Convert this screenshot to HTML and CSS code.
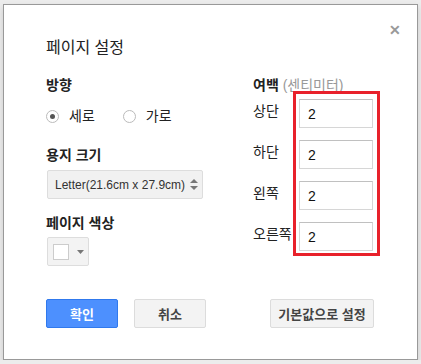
FILE: index.html
```html
<!DOCTYPE html>
<html lang="ko">
<head>
    <meta charset="UTF-8">
    <title>페이지 설정</title>
    <link rel="stylesheet" href="styles.css">
</head>
<body>

<div class="dialog">
    <span class="close">&#x2715;</span>
    <h1 class="title">페이지 설정</h1>

    <div class="columns">
        <div class="col-left">
            <h2 class="label">방향</h2>
            <div class="radios">
                <label class="radio"><span class="dot checked"></span>세로</label>
                <label class="radio"><span class="dot"></span>가로</label>
            </div>

            <h2 class="label">용지 크기</h2>
            <div class="select">
                <span>Letter(21.6cm x 27.9cm)</span>
                <svg width="8" height="11" viewBox="0 0 8 11"><path d="M4 0L8 4H0Z M4 11L0 7H8Z" fill="#777"/></svg>
            </div>

            <h2 class="label">페이지 색상</h2>
            <div class="color-btn">
                <span class="swatch"></span>
                <svg width="7" height="4" viewBox="0 0 7 4"><path d="M0 0H7L3.5 4Z" fill="#777"/></svg>
            </div>
        </div>

        <div class="col-right">
            <h2 class="label">여백 <span class="unit">(센티미터)</span></h2>
            <div class="margins">
                <div class="names">
                    <span>상단</span>
                    <span>하단</span>
                    <span>왼쪽</span>
                    <span>오른쪽</span>
                </div>
                <div class="highlight">
                    <input class="field" value="2">
                    <input class="field" value="2">
                    <input class="field" value="2">
                    <input class="field" value="2">
                </div>
            </div>
        </div>
    </div>

    <div class="buttons">
        <button class="btn primary">확인</button>
        <button class="btn">취소</button>
        <button class="btn reset">기본값으로 설정</button>
    </div>
</div>

</body>
</html>
```

FILE: styles.css
```css
body {
    margin: 0;
    background-color: #ececec;
    font-family: "Liberation Sans", Arial, "Noto Sans CJK KR", sans-serif;
    color: #222;
}
.dialog {
    position: relative;
    box-sizing: border-box;
    width: 415px;
    height: 356px;
    margin: 4px 0 0 3px;
    padding: 0 36px 0 42px;
    background-color: #fff;
    border: 1px solid #999;
    box-shadow: 0 3px 6px rgba(0, 0, 0, 0.15);
}
.close {
    position: absolute;
    top: 17px;
    right: 16px;
    font-size: 14px;
    font-weight: bold;
    color: #999;
}
.title {
    margin: 32px 0 0;
    font-size: 16px;
    font-weight: normal;
    line-height: 22px;
}
.columns {
    display: flex;
    margin-top: 17px;
}
.col-left {
    flex-shrink: 0;
    width: 207px;
}
.col-right {
    flex: 1;
}
.label {
    margin: 0;
    font-size: 14px;
    font-weight: bold;
    line-height: 18px;
}
.unit {
    font-weight: normal;
    color: #999;
}
.radios {
    display: flex;
    gap: 28px;
    margin: 14px 0 22px;
    font-size: 14px;
    line-height: 16px;
}
.radio {
    display: flex;
    align-items: center;
    gap: 10px;
}
.dot {
    box-sizing: border-box;
    width: 13px;
    height: 13px;
    border: 1px solid #bbb;
    border-radius: 50%;
    display: flex;
    align-items: center;
    justify-content: center;
}
.dot.checked::after {
    content: "";
    width: 5px;
    height: 5px;
    border-radius: 50%;
    background-color: #555;
}
.select {
    box-sizing: border-box;
    display: flex;
    align-items: center;
    justify-content: space-between;
    width: 156px;
    height: 29px;
    margin: 6px 0 15px 1px;
    padding: 0 4px 0 7px;
    background-color: #f1f1f1;
    border: 1px solid #ddd;
    border-radius: 2px;
    font-size: 12px;
    color: #333;
}
.color-btn {
    box-sizing: border-box;
    display: flex;
    align-items: center;
    gap: 8px;
    width: 42px;
    height: 29px;
    margin: 5px 0 0 1px;
    padding-left: 5px;
    background-color: #f3f3f3;
    border: 1px solid #ddd;
    border-radius: 2px;
}
.swatch {
    box-sizing: border-box;
    width: 16px;
    height: 16px;
    background-color: #fff;
    border: 1px solid #ccc;
}
.margins {
    display: flex;
    margin-top: -3px;
}
.names {
    flex-shrink: 0;
    width: 40px;
    display: flex;
    flex-direction: column;
    padding-top: 11px;
    gap: 23px;
    font-size: 14px;
    line-height: 18px;
}
.highlight {
    display: flex;
    flex-direction: column;
    gap: 12px;
    padding: 5px 4px 2px 3px;
    border: 3px solid #e8212b;
}
.field {
    box-sizing: border-box;
    width: 74px;
    height: 29px;
    margin: 0;
    padding: 0 8px;
    border: 1px solid #d6d6d6;
    border-top-color: #c0c0c0;
    font-family: "Liberation Sans", Arial, sans-serif;
    font-size: 14px;
    color: #111;
}
.buttons {
    display: flex;
    margin-top: 33px;
}
.btn {
    box-sizing: border-box;
    width: 72px;
    height: 29px;
    margin-right: 16px;
    background-color: #f3f3f3;
    border: 1px solid #dcdcdc;
    border-radius: 2px;
    font-family: "Liberation Sans", Arial, "Noto Sans CJK KR", sans-serif;
    font-size: 13px;
    font-weight: bold;
    color: #444;
}
.btn.primary {
    background-color: #4d90fe;
    border-color: #3079ed;
    color: #fff;
}
.btn.reset {
    width: 104px;
    margin: 0 7px 0 auto;
}
```
